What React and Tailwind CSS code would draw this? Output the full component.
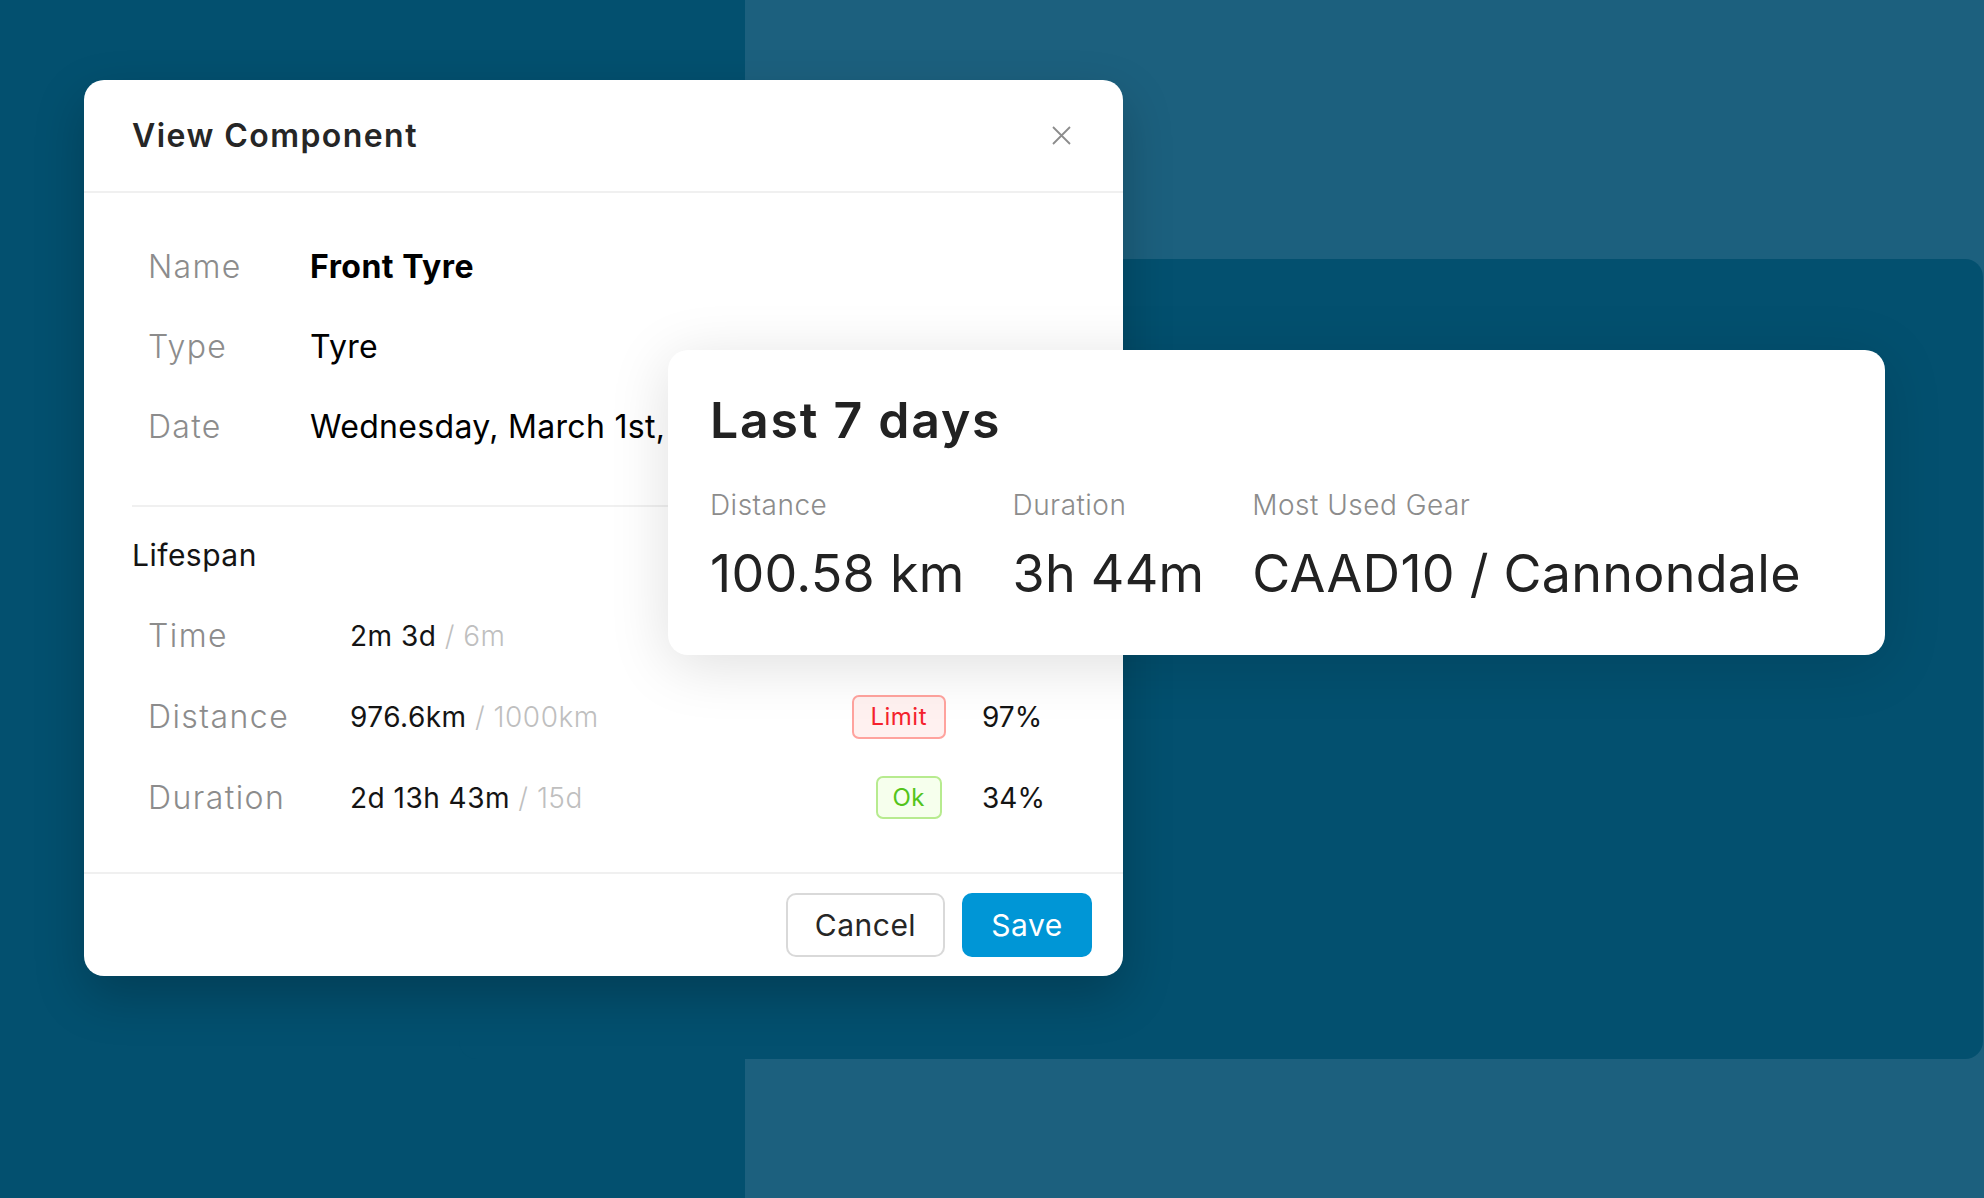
import React from 'react';

const details = [
  { label: 'Name', value: 'Front Tyre', bold: true },
  { label: 'Type', value: 'Tyre' },
  { label: 'Date', value: 'Wednesday, March 1st,' },
];

const lifespan = [
  { label: 'Time', used: '2m 3d', max: '6m' },
  { label: 'Distance', used: '976.6km', max: '1000km', status: 'limit', pct: '97%' },
  { label: 'Duration', used: '2d 13h 43m', max: '15d', status: 'ok', pct: '34%' },
];

const stats = [
  { label: 'Distance', value: '100.58 km' },
  { label: 'Duration', value: '3h 44m' },
  { label: 'Most Used Gear', value: 'CAAD10 / Cannondale' },
];

function Tag({ status }) {
  if (status === 'limit') {
    return (
      <span className="h-[44px] px-[17px] flex items-center rounded-[7px] border-2 border-[#ffa39e] bg-[#fff1f0] text-[#f5222d] text-[24px]">
        Limit
      </span>
    );
  }
  return (
    <span className="h-[43px] px-[15px] mr-[4px] flex items-center rounded-[7px] border-2 border-[#b7eb8f] bg-[#f6ffed] text-[#52c41a] text-[24px]">
      Ok
    </span>
  );
}

export default function App() {
  return (
    <div className="relative w-[1984px] h-[1198px] overflow-hidden bg-[#1c607e] font-['Inter',sans-serif] tracking-[0.03em]">
      {/* background panels */}
      <div className="absolute left-0 top-[-30px] w-[745px] h-[1260px] rounded-[18px] bg-[#03506f]" />
      <div className="absolute left-[459px] top-[259px] w-[1524px] h-[800px] rounded-[18px] bg-[#03506f]" />

      {/* modal */}
      <div className="absolute left-[84px] top-[80px] w-[1039px] h-[896px] rounded-[20px] bg-white flex flex-col shadow-[0_20px_50px_rgba(0,0,0,0.22)]">
        <div className="h-[113px] shrink-0 pl-[48px] pr-[52px] flex items-center justify-between border-b-2 border-[#f0f0f0]">
          <h2 className="text-[32px] font-semibold text-[#262626] tracking-[0.045em]">View Component</h2>
          <svg width="19" height="19" viewBox="0 0 19 19" fill="none" stroke="#8c8c8c" strokeWidth="1.8">
            <path d="M1 1L18 18M18 1L1 18" />
          </svg>
        </div>

        <div className="flex-1 px-[48px] pt-[34px]">
          {details.map((d) => (
            <div key={d.label} className="h-[80px] pl-[16px] flex items-center text-[32px]">
              <span className="w-[162px] shrink-0 font-light text-[#8c8c8c] tracking-[0.04em]">{d.label}</span>
              <span className={d.bold ? 'font-bold text-black' : 'text-black whitespace-nowrap tracking-[0.01em]'}>
                {d.value}
              </span>
            </div>
          ))}

          <div className="mt-[38px] h-[2px] bg-[#f0f0f0]" />

          <div className="mt-[28px] h-[40px] leading-[40px] text-[30px] text-[#141414]">Lifespan</div>

          <div className="mt-[20px]">
            {lifespan.map((r) => (
              <div key={r.label} className="h-[81px] pl-[16px] flex items-center">
                <span className="w-[202px] text-[32px] font-light text-[#8c8c8c] tracking-[0.045em]">{r.label}</span>
                <span className="flex-1 text-[28px] text-[#141414]">
                  {r.used}
                  <span className="font-light text-[#bfbfbf]"> / {r.max}</span>
                </span>
                {r.status && <Tag status={r.status} />}
                <span className="ml-[36px] w-[93px] text-[28px] text-[#141414] tracking-normal">{r.pct}</span>
              </div>
            ))}
          </div>
        </div>

        <div className="h-[104px] shrink-0 border-t-2 border-[#f0f0f0] flex items-center justify-end gap-[17px] pr-[31px]">
          <button className="w-[159px] h-[64px] rounded-[10px] border-2 border-[#d9d9d9] bg-white text-[30px] text-[#262626]">
            Cancel
          </button>
          <button className="w-[130px] h-[64px] rounded-[10px] bg-[#0096d6] text-[30px] text-white">
            Save
          </button>
        </div>
      </div>

      {/* last 7 days card */}
      <div className="absolute left-[668px] top-[350px] w-[1217px] h-[305px] rounded-[20px] bg-white pl-[42px] pt-[45px] shadow-[0_10px_60px_rgba(0,0,0,0.13)]">
        <h3 className="text-[50px] leading-none font-semibold text-[#222] tracking-[0.035em]">Last 7 days</h3>
        <div className="mt-[46px] flex gap-[48px]">
          {stats.map((s) => (
            <div key={s.label} className="flex flex-col">
              <span className="text-[28px] leading-none font-light text-[#8c8c8c]">{s.label}</span>
              <span className="mt-[29px] text-[52px] leading-none text-[#222] whitespace-nowrap tracking-[0.005em]">{s.value}</span>
            </div>
          ))}
        </div>
      </div>
    </div>
  );
}
